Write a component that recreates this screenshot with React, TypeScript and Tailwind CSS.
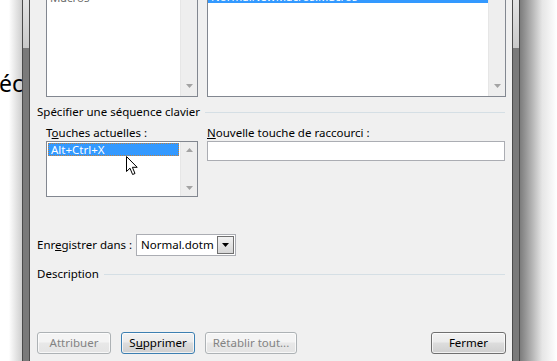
import React from "react";

const FONT = { fontFamily: '"Noto Sans", "Segoe UI", sans-serif' };

function ArrowUp() {
  return (
    <svg width="7" height="4" viewBox="0 0 7 4">
      <path d="M0 4 L3.5 0 L7 4 Z" fill="#a3a3a3" />
    </svg>
  );
}

function ArrowDown({ color = "#a3a3a3" }: { color?: string }) {
  return (
    <svg width="7" height="4" viewBox="0 0 7 4">
      <path d="M0 0 L7 0 L3.5 4 Z" fill={color} />
    </svg>
  );
}

function Scrollbar() {
  return (
    <div className="flex w-[17px] flex-col items-center justify-between border-l border-[#e6e6e6] bg-[#eeeeee] py-[6px]">
      <ArrowUp />
      <ArrowDown />
    </div>
  );
}

function Button({
  children,
  disabled,
  focused,
  width,
}: {
  children: React.ReactNode;
  disabled?: boolean;
  focused?: boolean;
  width: string;
}) {
  const border = disabled
    ? "border-[#adb2b5] text-[#838383]"
    : focused
      ? "border-[#3c7fb1] text-black"
      : "border-[#707070] text-black";
  return (
    <div
      className={`${width} flex h-[22px] items-center justify-center whitespace-nowrap rounded-[3px] border ${border}`}
      style={{
        background: disabled
          ? "linear-gradient(#f4f4f4 0%, #f4f4f4 45%, #e8e8e8 50%, #e4e4e4 100%)"
          : "linear-gradient(#f2f2f2 0%, #ebebeb 45%, #dddddd 50%, #cfcfcf 100%)",
        boxShadow: "inset 0 0 0 1px rgba(255,255,255,0.7)",
      }}
    >
      {children}
    </div>
  );
}

function Frame() {
  return (
    <div className="flex w-[8px] shrink-0 flex-col border-x border-[#4b4b4b]">
      <div className="h-[48px] bg-gradient-to-b from-[#e4e4e4] to-[#c9c9c9]" />
      <div className="flex-1 bg-[#7a7a7a]" />
    </div>
  );
}

export default function App() {
  return (
    <div className="flex h-[361px] w-[557px] overflow-hidden bg-white" style={FONT}>
      {/* document text behind the dialog, with the dialog shadow */}
      <div className="relative w-[22px] shrink-0 overflow-hidden bg-gradient-to-r from-white from-40% to-[#cfcfcf]">
        <p className="ml-[-1px] mt-[68px] text-[23px] leading-[30px] text-black">éc</p>
      </div>

      <Frame />

      <div className="flex w-[482px] shrink-0 flex-col overflow-hidden bg-[#f0f0f0] pl-[7px] pr-[6px] text-[11.5px] whitespace-nowrap text-black">
        {/* macro lists */}
        <div className="flex h-[97px] shrink-0 pl-[9px]">
          <div className="flex w-[152px] border-x border-b border-[#828790] bg-white">
            <div className="flex-1 overflow-hidden">
              <div className="mt-[-9px] pl-[3px] leading-[13px] text-[#6d6d6d]">Macros</div>
            </div>
            <div className="flex w-[17px] flex-col items-center justify-end border-l border-[#e6e6e6] bg-[#eeeeee] pb-[8px]">
              <ArrowDown />
            </div>
          </div>
          <div className="ml-[9px] flex w-[299px] border-x border-b border-[#828790] bg-white">
            <div className="flex-1 overflow-hidden">
              <div className="mt-[-10px] h-[13px] bg-[#3399ff] pl-[3px] leading-[13px] text-white">
                NormalNewMacros.Macros
              </div>
            </div>
            <div className="flex w-[17px] flex-col items-center justify-end border-l border-[#e6e6e6] bg-[#eeeeee] pb-[8px]">
              <ArrowDown />
            </div>
          </div>
        </div>

        {/* group header */}
        <div className="mt-[7px] flex h-[16px] shrink-0 items-center pr-px">
          <span>Spécifier une séquence clavier</span>
          <div className="ml-[5px] h-px flex-1 bg-[#d5dfe5]" />
        </div>

        <div className="mt-[4px] flex shrink-0 pl-[9px]">
          <div className="w-[152px]">
            <div className="h-[17px] leading-[17px]">
              T<span className="underline">o</span>uches actuelles :
            </div>
            <div className="relative flex h-[56px] border border-[#828790] bg-white">
              <div className="flex-1 p-px">
                <div className="h-[13px] border border-dotted border-[#c08040] bg-[#3399ff] pl-[2px] leading-[11px] text-white">
                  Alt+Ctrl+X
                </div>
              </div>
              <Scrollbar />
              <svg
                className="absolute left-[79px] top-[14px]"
                width="13"
                height="20"
                viewBox="0 0 13 20"
              >
                <path
                  d="M0.5 0.5 L0.5 15.5 L4 12.2 L6.6 18.5 L9 17.5 L6.4 11.3 L11.2 11.3 Z"
                  fill="#fff"
                  stroke="#000"
                  strokeWidth="1"
                  strokeLinejoin="round"
                />
              </svg>
            </div>
          </div>
          <div className="ml-[9px] flex-1">
            <div className="h-[17px] leading-[17px]">
              <span className="underline">N</span>ouvelle touche de raccourci :
            </div>
            <div className="mr-px h-[20px] border border-[#abadb3] bg-white" />
          </div>
        </div>

        {/* save in */}
        <div className="mt-[37px] flex shrink-0 items-center">
          <span className="w-[99px] shrink-0">
            Enr<span className="underline">e</span>gistrer dans :
          </span>
          <div className="flex h-[22px] w-[100px] shrink-0 items-center border border-[#abadb3] bg-white p-px">
            <span className="flex-1 overflow-hidden pl-[3px]">Normal.dotm</span>
            <div className="flex h-full w-[17px] shrink-0 items-center justify-center border border-[#707070] bg-gradient-to-b from-[#f2f2f2] to-[#d6d6d6]">
              <ArrowDown color="#000" />
            </div>
          </div>
        </div>

        {/* description header */}
        <div className="mt-[10px] flex h-[16px] shrink-0 items-center pr-px">
          <span>Description</span>
          <div className="ml-[5px] h-px flex-1 bg-[#d5dfe5]" />
        </div>

        {/* buttons */}
        <div className="mt-[50px] flex shrink-0 gap-[10px]">
          <Button disabled width="w-[74px]">
            Attribuer
          </Button>
          <Button focused width="w-[74px]">
            S<span className="underline">u</span>pprimer
          </Button>
          <Button disabled width="w-[92px]">
            Rétablir tout...
          </Button>
          <div className="ml-auto">
            <Button width="w-[75px]">Fermer</Button>
          </div>
        </div>
      </div>

      <Frame />

      <div className="flex-1 bg-gradient-to-r from-[#7c7c7c] via-[#e6e6e6] via-60% to-white" />
    </div>
  );
}
